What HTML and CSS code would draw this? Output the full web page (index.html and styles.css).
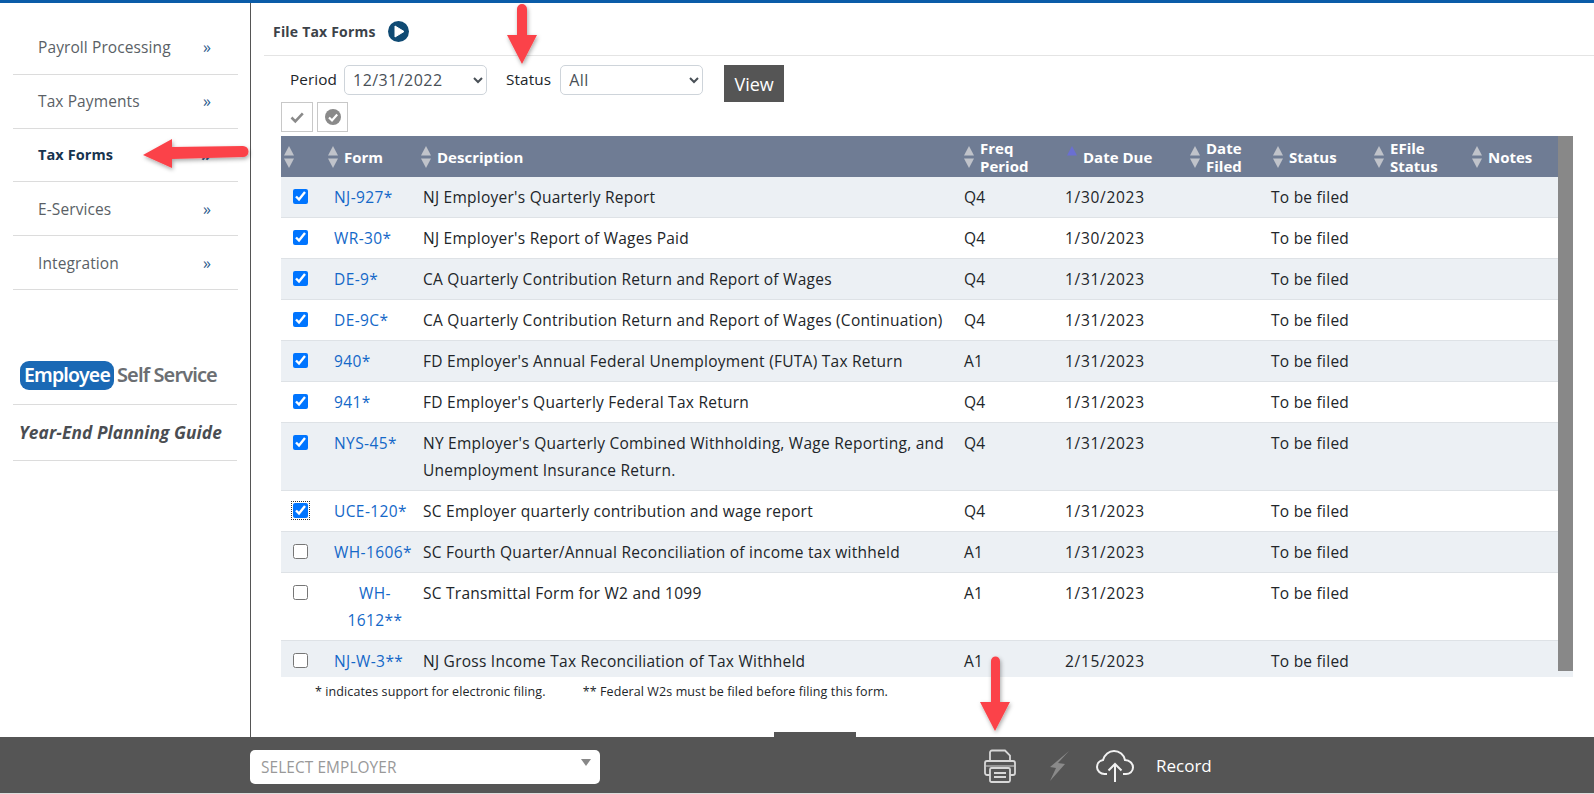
FILE: index.html
```html
<!DOCTYPE html>
<html lang="en">
<head>
<meta charset="utf-8">
<title>File Tax Forms</title>
<link rel="stylesheet" href="styles.css">
</head>
<body>
<svg width="0" height="0" class="defs">
  <symbol id="sort" viewBox="0 0 10 22"><path d="M5 0l5 9.500H0z"/><path d="M0 12.500h10L5 22z"/></symbol>
</svg>
<div class="topbar"></div>
<div class="main">
  <aside class="sidebar">
    <ul class="nav">
      <li class="nav-item"><span>Payroll Processing</span><span class="chev">»</span></li>
      <li class="nav-item"><span>Tax Payments</span><span class="chev">»</span></li>
      <li class="nav-item active"><span>Tax Forms</span><span class="chev">»</span></li>
      <li class="nav-item"><span>E-Services</span><span class="chev">»</span></li>
      <li class="nav-item"><span>Integration</span><span class="chev">»</span></li>
    </ul>
    <div class="ess"><span class="ess-pill">Employee</span><span class="ess-rest">Self Service</span></div>
    <div class="guide">Year-End Planning Guide</div>
  </aside>
  <section class="content">
    <header class="title-row">
      <h1 class="title">File Tax Forms</h1>
      <svg class="play" viewBox="0 0 21 21" width="21" height="21"><circle cx="10.500" cy="10.500" r="10.500" fill="#0f4a73"/><path d="M7 5l9 5.500-9 5.500z" fill="#fff" stroke="#fff" stroke-linejoin="round"/></svg>
    </header>
    <div class="filters">
      <label class="flabel">Period</label>
      <select class="fselect"><option>12/31/2022</option></select>
      <label class="flabel status-label">Status</label>
      <select class="fselect"><option>All</option></select>
      <button class="view">View</button>
    </div>
    <div class="tools">
      <button class="tool"><svg viewBox="0 0 16 16" width="16" height="16"><path d="M2.500 8.500l3.800 3.800 7.500-8" fill="none" stroke="#8a8a8a" stroke-width="2.600"/></svg></button>
      <button class="tool narrow"><svg viewBox="0 0 18 18" width="18" height="18"><circle cx="9" cy="9" r="8" fill="#8a8a8a"/><path d="M5 9.500l3 3 5.200-6" fill="none" stroke="#fff" stroke-width="2.200"/></svg></button>
    </div>
    <div class="table-wrap">
      <table class="grid">
        <colgroup><col class="c1"><col class="c2"><col class="c3"><col class="c4"><col class="c5"><col class="c6"><col class="c7"><col class="c8"><col class="c9"></colgroup>
        <thead>
          <tr>
            <th><div class="th"><svg class="si"><use href="#sort"/></svg></div></th>
            <th><div class="th"><svg class="si"><use href="#sort"/></svg><span>Form</span></div></th>
            <th><div class="th"><svg class="si"><use href="#sort"/></svg><span>Description</span></div></th>
            <th><div class="th"><svg class="si"><use href="#sort"/></svg><span>Freq<br>Period</span></div></th>
            <th><div class="th"><svg class="si up" viewBox="0 0 10 22"><path d="M5 0l5 9.500H0z"/></svg><span>Date Due</span></div></th>
            <th><div class="th"><svg class="si"><use href="#sort"/></svg><span>Date<br>Filed</span></div></th>
            <th><div class="th"><svg class="si"><use href="#sort"/></svg><span>Status</span></div></th>
            <th><div class="th"><svg class="si"><use href="#sort"/></svg><span>EFile<br>Status</span></div></th>
            <th><div class="th"><svg class="si"><use href="#sort"/></svg><span>Notes</span></div></th>
          </tr>
        </thead>
        <tbody>
          <tr><td><input type="checkbox" checked></td><td><a class="lnk">NJ-927*</a></td><td>NJ Employer's Quarterly Report</td><td>Q4</td><td>1/30/2023</td><td></td><td>To be filed</td><td></td><td></td></tr>
          <tr><td><input type="checkbox" checked></td><td><a class="lnk">WR-30*</a></td><td>NJ Employer's Report of Wages Paid</td><td>Q4</td><td>1/30/2023</td><td></td><td>To be filed</td><td></td><td></td></tr>
          <tr><td><input type="checkbox" checked></td><td><a class="lnk">DE-9*</a></td><td>CA Quarterly Contribution Return and Report of Wages</td><td>Q4</td><td>1/31/2023</td><td></td><td>To be filed</td><td></td><td></td></tr>
          <tr><td><input type="checkbox" checked></td><td><a class="lnk">DE-9C*</a></td><td>CA Quarterly Contribution Return and Report of Wages (Continuation)</td><td>Q4</td><td>1/31/2023</td><td></td><td>To be filed</td><td></td><td></td></tr>
          <tr><td><input type="checkbox" checked></td><td><a class="lnk">940*</a></td><td>FD Employer's Annual Federal Unemployment (FUTA) Tax Return</td><td>A1</td><td>1/31/2023</td><td></td><td>To be filed</td><td></td><td></td></tr>
          <tr><td><input type="checkbox" checked></td><td><a class="lnk">941*</a></td><td>FD Employer's Quarterly Federal Tax Return</td><td>Q4</td><td>1/31/2023</td><td></td><td>To be filed</td><td></td><td></td></tr>
          <tr><td><input type="checkbox" checked></td><td><a class="lnk">NYS-45*</a></td><td>NY Employer's Quarterly Combined Withholding, Wage Reporting, and Unemployment Insurance Return.</td><td>Q4</td><td>1/31/2023</td><td></td><td>To be filed</td><td></td><td></td></tr>
          <tr><td><input class="focused" type="checkbox" checked></td><td><a class="lnk">UCE-120*</a></td><td>SC Employer quarterly contribution and wage report</td><td>Q4</td><td>1/31/2023</td><td></td><td>To be filed</td><td></td><td></td></tr>
          <tr><td><input type="checkbox"></td><td><a class="lnk">WH-1606*</a></td><td>SC Fourth Quarter/Annual Reconciliation of income tax withheld</td><td>A1</td><td>1/31/2023</td><td></td><td>To be filed</td><td></td><td></td></tr>
          <tr><td><input type="checkbox"></td><td class="center"><a class="lnk">WH-<br>1612**</a></td><td>SC Transmittal Form for W2 and 1099</td><td>A1</td><td>1/31/2023</td><td></td><td>To be filed</td><td></td><td></td></tr>
          <tr><td><input type="checkbox"></td><td><a class="lnk">NJ-W-3**</a></td><td>NJ Gross Income Tax Reconciliation of Tax Withheld</td><td>A1</td><td>2/15/2023</td><td></td><td>To be filed</td><td></td><td></td></tr>
        </tbody>
      </table>
      <div class="thumb"></div>
    </div>
    <p class="notes"><span>* indicates support for electronic filing.</span><span>** Federal W2s must be filed before filing this form.</span></p>
  </section>
</div>
<footer class="footer">
  <div class="tab"></div>
  <div class="employer"><span>SELECT EMPLOYER</span><i class="caret"></i></div>
  <div class="actions">
    <svg class="printer" viewBox="0 0 32 34" width="32" height="34" fill="none" stroke="#d8d8d8" stroke-width="1.800"><path d="M6 12V3.500a2 2 0 0 1 2-2h13l5 5V12"/><path d="M6 26H3a2 2 0 0 1-2-2V14a2 2 0 0 1 2-2h26a2 2 0 0 1 2 2v10a2 2 0 0 1-2 2h-3"/><rect x="6" y="19" width="20" height="14" rx="1.500"/><path d="M10 24h12M10 28h12"/><path d="M2 17h28" stroke-width="1"/></svg>
    <svg class="bolt" viewBox="0 0 20 30" width="20" height="30"><path d="M19 0L8 12l7 1L0 30l6-13-6-1z" fill="#8a8a8a"/></svg>
    <svg class="cloud" viewBox="0 0 38 32" width="38" height="32" fill="none" stroke="#f2f2f2" stroke-width="2"><path d="M11 24H8.500C4.500 24 1 21 1 17c0-3.500 2.500-6.500 6-7C8.500 4.500 13 1 18 1c5.500 0 10 3.800 11 9 4.500.3 8 3.300 8 7.500 0 3.800-3.200 6.500-7 6.500h-3"/><path d="M19 32V14M12.500 20.500L19 14l6.500 6.500"/></svg>
    <span class="record">Record</span>
  </div>
</footer>
<svg class="annot" width="1594" height="794" viewBox="0 0 1594 794">
  <defs><filter id="sh" x="-30%" y="-30%" width="160%" height="160%"><feDropShadow dx="1" dy="2" stdDeviation="2" flood-color="#000" flood-opacity=".35"/></filter></defs>
  <g fill="#fb4349" filter="url(#sh)">
    <path d="M517 9a5 5 0 0 1 10 0v26h10l-15 29-15-29h10z"/>
    <path d="M143 155l29-16v8l71-1a5.500 5.500 0 0 1 0 11l-71 2v9z"/>
    <path d="M991 661a4.500 4.500 0 0 1 9 0v41h10l-15 29-15-29h11z"/>
  </g>
</svg>
</body>
</html>
```
FILE: styles.css
```css
* { box-sizing: border-box; }
html, body { margin: 0; padding: 0; height: 794px; overflow: hidden; }
body {
  display: flex;
  flex-direction: column;
  position: relative;
  font-family: "Open Sans", "Noto Sans", sans-serif;
  font-size: 15.500px;
  letter-spacing: .25px;
  color: #212529;
  background: #fff;
}
.defs { position: absolute; }
.topbar { height: 3px; background: #0a5ca8; flex: none; }
.main { flex: 1; display: flex; min-height: 0; }

.sidebar { width: 251px; flex: none; border-right: 1px solid #555; padding: 18px 13px 0; }
.nav { list-style: none; margin: 0; padding: 0; width: 225px; }
.nav-item {
  height: 53.800px;
  display: flex;
  align-items: center;
  justify-content: space-between;
  padding: 0 27px 0 25px;
  border-bottom: 1px solid #dcdcdc;
  color: #5a5f66;
  font-size: 15.500px;
  letter-spacing: .1px;
}
.nav-item.active { color: #17344f; font-weight: 700; font-size: 14.500px; }
.chev { color: #2d5c8c; font-size: 16px; }
.ess { display: flex; align-items: center; height: 115px; padding: 57px 0 0 7px; border-bottom: 1px solid #dcdcdc; }
.ess-pill {
  background: #1a69b5;
  color: #fff;
  border-radius: 9px;
  height: 29px;
  width: 94px;
  text-align: center;
  font: 600 19.500px/28px "Noto Sans", sans-serif;
  letter-spacing: -.8px;
}
.ess-rest { color: #6b6e72; font: 600 20px/28px "Noto Sans", sans-serif; letter-spacing: -.9px; margin-left: 3px; }
.guide {
  height: 56px;
  display: flex;
  align-items: center;
  padding-left: 6px;
  border-bottom: 1px solid #dcdcdc;
  font-style: italic;
  font-weight: 700;
  font-size: 17.300px;
  letter-spacing: .1px;
  color: #4a4d52;
}

.content { flex: 1; min-width: 0; display: flex; flex-direction: column; }
.title-row {
  height: 53px;
  flex: none;
  margin-left: 13px;
  padding: 5px 0 0 9px;
  display: flex;
  align-items: center;
  gap: 12px;
  border-bottom: 1px solid #e4e4e4;
}
.title { margin: 0; font-size: 14px; font-weight: 700; color: #3c4249; letter-spacing: .2px; }
.filters { display: flex; align-items: flex-start; margin-top: 9px; padding-left: 39px; height: 37px; flex: none; }
.flabel { line-height: 29px; margin-right: 7px; font-size: 15.300px; letter-spacing: .1px; }
.status-label { margin-left: 19px; margin-right: 9px; }
.fselect {
  width: 143px;
  height: 30px;
  border: 1px solid #ced4da;
  border-radius: 5px;
  background: #fff;
  padding-left: 4px;
  font: 16px "Open Sans", sans-serif;
  letter-spacing: .45px;
  color: #495057;
}
.view {
  margin-left: 21px;
  width: 60px;
  height: 37px;
  border: 0;
  background: #555;
  color: #fff;
  font: 18px "Open Sans", sans-serif;
}
.tools { display: flex; gap: 4px; margin-left: 30px; height: 30px; flex: none; }
.tool {
  width: 32px;
  height: 30px;
  padding: 0;
  display: flex;
  align-items: center;
  justify-content: center;
  background: #fff;
  border: 1px solid #c8c8c8;
}
.tool.narrow { width: 31px; }
.table-wrap { position: relative; margin: 4px 21px 0 30px; height: 541px; overflow: hidden; flex: none; }
.grid { width: 1292px; table-layout: fixed; border-collapse: collapse; }
.c1 { width: 44px; } .c2 { width: 93px; } .c3 { width: 543px; } .c4 { width: 103px; }
.c5 { width: 123px; } .c6 { width: 83px; } .c7 { width: 101px; } .c8 { width: 98px; } .c9 { width: 104px; }
.grid thead tr { background: #6f7c94; height: 41px; }
.grid th { padding: 0 0 0 3px; font-size: 15px; line-height: 18px; letter-spacing: 0; font-weight: 700; color: #fff; text-align: left; }
.th { display: flex; align-items: center; gap: 6px; }
.si { width: 10px; height: 22px; fill: #c0c3ca; flex: none; }
.si.up { fill: #6a6fd2; }
.grid td { padding: 6.500px 2px 6.500px 3px; line-height: 27px; vertical-align: top; border-bottom: 1px solid #dee2e6; }
.grid tbody tr:nth-child(odd) { background: #ecf0f4; }
.grid td:first-child { padding-left: 12px; }
.grid td:nth-child(2) { padding-left: 9px; }
.grid td:nth-child(3) { padding-left: 5px; }
.grid td:nth-child(5) { padding-left: 1px; letter-spacing: .7px; }
.grid td:nth-child(7) { padding-left: 1px; }
.grid input { width: 15px; height: 15px; margin: 5px 0 0; display: block; }
.focused { outline: 1px dotted #333; outline-offset: 1px; }
.center { text-align: center; }
.lnk { color: #1468c8; letter-spacing: .4px; }
.thumb { position: absolute; top: 0; right: 0; width: 15px; height: 535px; background: #888; }
.notes { margin: 7px 0 0 64px; font-size: 12.500px; line-height: 16px; letter-spacing: .1px; display: flex; gap: 37px; }

.footer {
  position: relative;
  height: 57px;
  flex: none;
  background: #555;
  border-bottom: 1px solid #ddd;
  display: flex;
  align-items: flex-start;
}
.tab { position: absolute; left: 774px; top: -5px; width: 82px; height: 5px; background: #555; }
.employer {
  position: relative;
  margin: 13px 0 0 250px;
  width: 350px;
  height: 34px;
  background: #fff;
  border-radius: 5px;
  padding-left: 11px;
  line-height: 36px;
  font-size: 15.400px;
  letter-spacing: .1px;
  color: #999;
}
.caret {
  position: absolute;
  right: 9px;
  top: 9px;
  border-left: 5px solid transparent;
  border-right: 5px solid transparent;
  border-top: 7px solid #888;
}
.actions { display: flex; align-items: center; margin: 12px 0 0 384px; }
.bolt { margin-left: 34px; }
.cloud { margin-left: 26px; }
.record { margin-left: 22px; padding-bottom: 2px; color: #fff; font-size: 17px; letter-spacing: 0; }
.annot { position: absolute; left: 0; top: 0; pointer-events: none; }
```
